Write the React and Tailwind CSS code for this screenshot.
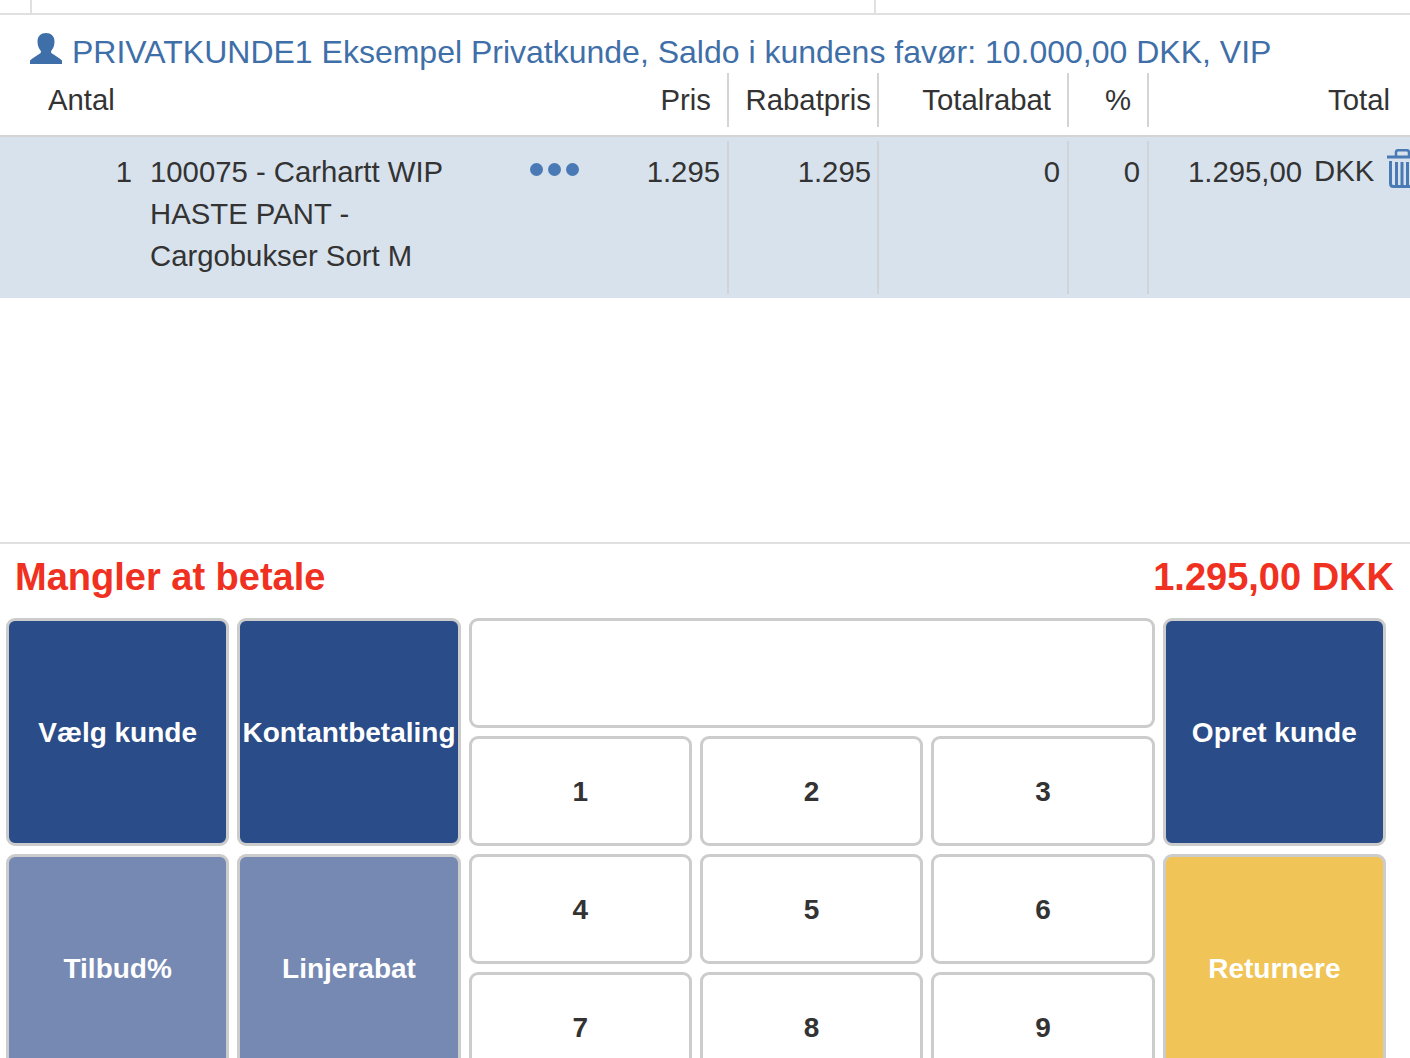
const FONT = "font-['Liberation_Sans',Arial,sans-serif]";

function UserIcon() {
  return (
    <svg viewBox="0 0 32 31" className="mb-[6px] h-[31px] w-[32px] shrink-0 fill-[#3f6fa8]">
      <path d="M16 0C11 0 7.5 3 7.5 8.5c0 3.5 1 6.5 3 9 .7 1 .6 2.3-.5 3C7 22.5 3 24.5 0 27.5V31h32v-3.5C29 24.5 25 22.5 22 20.5c-1.1-.7-1.2-2-.5-3 2-2.5 3-5.5 3-9C24.5 3 21 0 16 0z" />
    </svg>
  );
}

function TrashIcon() {
  return (
    <svg viewBox="0 0 30 39" className="block h-[39px] w-[30px] max-w-none fill-none stroke-[#4a7ab5]">
      <path d="M0 8h30" strokeWidth="3" />
      <path d="M9 7V3.5C9 2 10 1.2 11.5 1.2h8C21 1.2 22 2 22 3.5V7" strokeWidth="2.5" />
      <path d="M3.5 12v22.5c0 2 1 3 3 3h17c2 0 3-1 3-3V12" strokeWidth="3" />
      <path d="M9.5 13v23M15 13v23M20.5 13v23" strokeWidth="3" />
    </svg>
  );
}

function Pad({ children, className }) {
  return (
    <div className={`flex items-center justify-center rounded-[9px] border-[3px] border-[#cccccc] pt-[2px] text-[28px] font-bold ${className}`}>
      {children}
    </div>
  );
}

function Num({ n }) {
  return <Pad className="bg-white text-[#333333]">{n}</Pad>;
}

export default function App() {
  return (
    <div className={`${FONT} h-[1058px] w-full overflow-hidden bg-white text-[#333333]`}>
      <div className="flex h-[15px] border-b-2 border-[#e0e0e0]">
        <div className="ml-[30px] w-[846px] border-x-2 border-[#e0e0e0]" />
      </div>

      <div className="flex h-[57px] items-center pl-[30px] pt-[16px] text-[#3f6fa8]">
        <UserIcon />
        <span className="ml-[10px] whitespace-nowrap text-[32px] leading-[36px]">
          PRIVATKUNDE1 Eksempel Privatkunde, Saldo i kundens favør: 10.000,00 DKK, VIP
        </span>
      </div>

      <div className="flex h-[65px] border-b-2 border-[#d4d4d4] pt-[1px] text-[29.3px] leading-[54px]">
        <div className="flex w-[727px] shrink-0 pl-[48px]">
          <span>Antal</span>
          <span className="ml-auto pr-[16px]">Pris</span>
        </div>
        <div className="h-[54px] w-[152px] shrink-0 border-x-2 border-[#d4d4d4] pr-[6px] text-right">Rabatpris</div>
        <div className="h-[54px] w-[188px] shrink-0 pr-[16px] text-right">Totalrabat</div>
        <div className="h-[54px] w-[82px] shrink-0 border-x-2 border-[#d4d4d4] pr-[16px] text-right">%</div>
        <div className="h-[54px] flex-1 pr-[20px] text-right">Total</div>
      </div>

      <div className="flex h-[161px] bg-[#d8e2ec] pt-[4px] text-[29.3px] leading-[42px]">
        <div className="flex w-[727px] shrink-0">
          <div className="w-[132px] shrink-0 pt-[10px] text-right">1</div>
          <div className="ml-[18px] w-[360px] shrink-0 pt-[10px]">100075 - Carhartt WIP HASTE PANT - Cargobukser Sort M</div>
          <div className="ml-[20px] mt-[22px] flex h-[14px] gap-[5px]">
            <span className="h-[13px] w-[13px] rounded-full bg-[#4a7ab5]" />
            <span className="h-[13px] w-[13px] rounded-full bg-[#4a7ab5]" />
            <span className="h-[13px] w-[13px] rounded-full bg-[#4a7ab5]" />
          </div>
          <div className="ml-auto pr-[7px] pt-[10px]">1.295</div>
        </div>
        <div className="h-[153px] w-[152px] shrink-0 border-x-2 border-[#d0d4d8] pr-[6px] pt-[10px] text-right">1.295</div>
        <div className="h-[153px] w-[188px] shrink-0 pr-[7px] pt-[10px] text-right">0</div>
        <div className="h-[153px] w-[82px] shrink-0 border-x-2 border-[#d0d4d8] pr-[7px] pt-[10px] text-right">0</div>
        <div className="flex min-w-0 flex-1">
          <span className="ml-[39px] shrink-0 pt-[10px]">1.295,00</span>
          <span className="ml-[12px] shrink-0 pt-[9px]">DKK</span>
          <span className="ml-[13px] shrink-0 pt-[8px]"><TrashIcon /></span>
        </div>
      </div>

      <div className="h-[246px] border-b-2 border-[#e0e0e0]" />

      <div className="flex h-[74px] justify-between pl-[15px] pr-[16px] pt-[10px] text-[38px] font-bold leading-[46px] text-[#f03020]">
        <span>Mangler at betale</span>
        <span>1.295,00 DKK</span>
      </div>

      <div className="ml-[6px] grid w-[1380px] grid-cols-6 grid-rows-[110px_110px_110px_110px] gap-[8px]">
        <Pad className="row-span-2 bg-[#2a4c88] text-white">Vælg kunde</Pad>
        <Pad className="row-span-2 bg-[#2a4c88] text-white">Kontantbetaling</Pad>
        <div className="col-span-3 rounded-[9px] border-[3px] border-[#cccccc] bg-white" />
        <Pad className="row-span-2 bg-[#2a4c88] text-white">Opret kunde</Pad>
        <Num n="1" />
        <Num n="2" />
        <Num n="3" />
        <Pad className="row-span-2 bg-[#7689b3] text-white">Tilbud%</Pad>
        <Pad className="row-span-2 bg-[#7689b3] text-white">Linjerabat</Pad>
        <Num n="4" />
        <Num n="5" />
        <Num n="6" />
        <Pad className="row-span-2 bg-[#f0c456] text-white">Returnere</Pad>
        <Num n="7" />
        <Num n="8" />
        <Num n="9" />
      </div>
    </div>
  );
}
